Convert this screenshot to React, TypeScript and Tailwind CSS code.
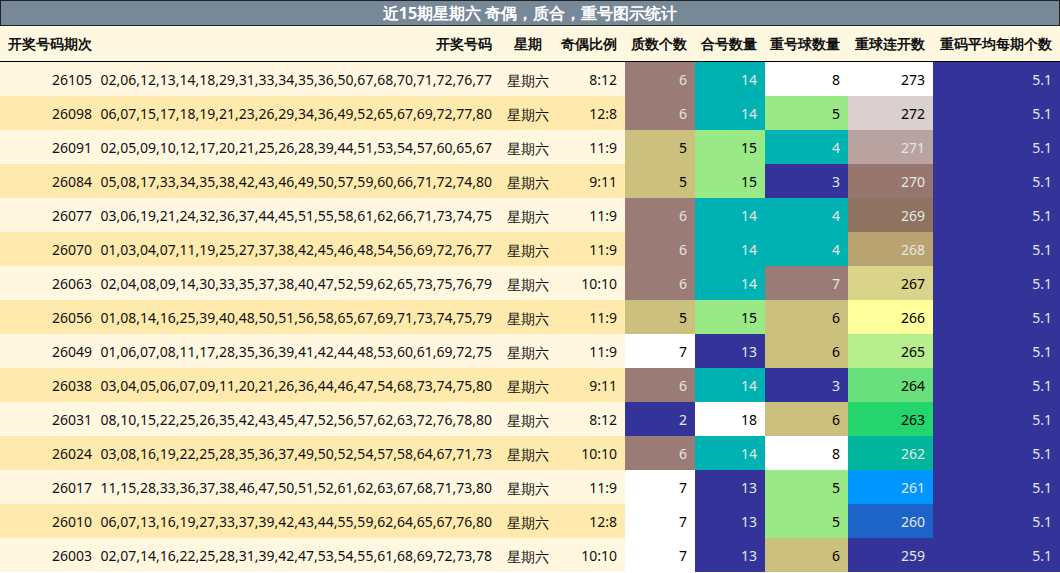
const ROWS: [string, string, string, number, number, number, number][] = [
  ["26105", "02,06,12,13,14,18,29,31,33,34,35,36,50,67,68,70,71,72,76,77", "8:12", 6, 14, 8, 273],
  ["26098", "06,07,15,17,18,19,21,23,26,29,34,36,49,52,65,67,69,72,77,80", "12:8", 6, 14, 5, 272],
  ["26091", "02,05,09,10,12,17,20,21,25,26,28,39,44,51,53,54,57,60,65,67", "11:9", 5, 15, 4, 271],
  ["26084", "05,08,17,33,34,35,38,42,43,46,49,50,57,59,60,66,71,72,74,80", "9:11", 5, 15, 3, 270],
  ["26077", "03,06,19,21,24,32,36,37,44,45,51,55,58,61,62,66,71,73,74,75", "11:9", 6, 14, 4, 269],
  ["26070", "01,03,04,07,11,19,25,27,37,38,42,45,46,48,54,56,69,72,76,77", "11:9", 6, 14, 4, 268],
  ["26063", "02,04,08,09,14,30,33,35,37,38,40,47,52,59,62,65,73,75,76,79", "10:10", 6, 14, 7, 267],
  ["26056", "01,08,14,16,25,39,40,48,50,51,56,58,65,67,69,71,73,74,75,79", "11:9", 5, 15, 6, 266],
  ["26049", "01,06,07,08,11,17,28,35,36,39,41,42,44,48,53,60,61,69,72,75", "11:9", 7, 13, 6, 265],
  ["26038", "03,04,05,06,07,09,11,20,21,26,36,44,46,47,54,68,73,74,75,80", "9:11", 6, 14, 3, 264],
  ["26031", "08,10,15,22,25,26,35,42,43,45,47,52,56,57,62,63,72,76,78,80", "8:12", 2, 18, 6, 263],
  ["26024", "03,08,16,19,22,25,28,35,36,37,49,50,52,54,57,58,64,67,71,73", "10:10", 6, 14, 8, 262],
  ["26017", "11,15,28,33,36,37,38,46,47,50,51,52,61,62,63,67,68,71,73,80", "11:9", 7, 13, 5, 261],
  ["26010", "06,07,13,16,19,27,33,37,39,42,43,44,55,59,62,64,65,67,76,80", "12:8", 7, 13, 5, 260],
  ["26003", "02,07,14,16,22,25,28,31,39,42,47,53,54,55,61,68,69,72,73,78", "10:10", 7, 13, 6, 259],
];

const BROWN = "bg-[#9a7b76] text-[#e6e6e6]";
const KHAKI = "bg-[#cbc07e] text-black";
const WHITE = "bg-white text-black";
const NAVY = "bg-[#333399] text-[#e6e6e6]";
const TEAL = "bg-[#00b2b2] text-[#e6e6e6]";
const GREEN = "bg-[#99e987] text-black";

const PRIME: Record<number, string> = { 6: BROWN, 5: KHAKI, 7: WHITE, 2: NAVY };
const HE: Record<number, string> = { 14: TEAL, 15: GREEN, 13: NAVY, 18: WHITE };
const CHONG: Record<number, string> = { 8: WHITE, 5: GREEN, 4: TEAL, 3: NAVY, 7: BROWN, 6: KHAKI };
const LIAN: Record<number, string> = {
  273: "bg-white text-black",
  272: "bg-[#d9d0cf] text-black",
  271: "bg-[#b8a3a0] text-[#e6e6e6]",
  270: "bg-[#977670] text-[#e6e6e6]",
  269: "bg-[#8f7361] text-[#e6e6e6]",
  268: "bg-[#b9a371] text-[#e6e6e6]",
  267: "bg-[#dad48a] text-black",
  266: "bg-[#ffff9c] text-black",
  265: "bg-[#b8ee8e] text-black",
  264: "bg-[#69e07c] text-black",
  263: "bg-[#24d46c] text-black",
  262: "bg-[#00b79b] text-[#e6e6e6]",
  261: "bg-[#0096ff] text-[#e6e6e6]",
  260: "bg-[#1c64c8] text-[#e6e6e6]",
  259: "bg-[#333399] text-[#e6e6e6]",
};

const GRID = "grid grid-cols-[100px_400px_55px_70px_70px_70px_83px_85px_127px]";

export default function App() {
  return (
    <div className="w-[1060px] h-[573px] overflow-hidden bg-white text-[14px] font-['Liberation_Sans','Noto_Sans_CJK_SC',sans-serif]">
      <div className="h-[26px] bg-[#778899] border border-[#222] flex items-center justify-center text-white font-bold text-[16px] font-['Liberation_Serif','Noto_Sans_CJK_SC',serif]">
        近15期星期六 奇偶，质合，重号图示统计
      </div>
      <div className={`${GRID} h-[36px] bg-[#fff8e1] border-b border-black font-bold text-[#111] items-center`}>
        <div className="pl-2">开奖号码期次</div>
        <div className="text-right pr-2">开奖号码</div>
        <div className="text-center">星期</div>
        <div className="text-right pr-2">奇偶比例</div>
        <div className="text-right pr-2">质数个数</div>
        <div className="text-right pr-2">合号数量</div>
        <div className="text-right pr-2">重号球数量</div>
        <div className="text-right pr-2">重球连开数</div>
        <div className="text-right pr-2">重码平均每期个数</div>
      </div>
      {ROWS.map(([id, nums, ratio, p, h, c, l], i) => {
        const bg = i % 2 === 0 ? "bg-[#fff7e0]" : "bg-[#ffeaae]";
        return (
          <div key={id} className={`${GRID} h-[34px] text-[#111]`}>
            <div className={`${bg} flex items-center justify-end pr-2`}>{id}</div>
            <div className={`${bg} flex items-center justify-end pr-2`}>{nums}</div>
            <div className={`${bg} flex items-center justify-center pt-[3px]`}>星期六</div>
            <div className={`${bg} flex items-center justify-end pr-2`}>{ratio}</div>
            <div className={`${PRIME[p]} flex items-center justify-end pr-2`}>{p}</div>
            <div className={`${HE[h]} flex items-center justify-end pr-2`}>{h}</div>
            <div className={`${CHONG[c]} flex items-center justify-end pr-2`}>{c}</div>
            <div className={`${LIAN[l]} flex items-center justify-end pr-2`}>{l}</div>
            <div className="bg-[#333399] text-[#e6e6e6] flex items-center justify-end pr-2">5.1</div>
          </div>
        );
      })}
    </div>
  );
}
